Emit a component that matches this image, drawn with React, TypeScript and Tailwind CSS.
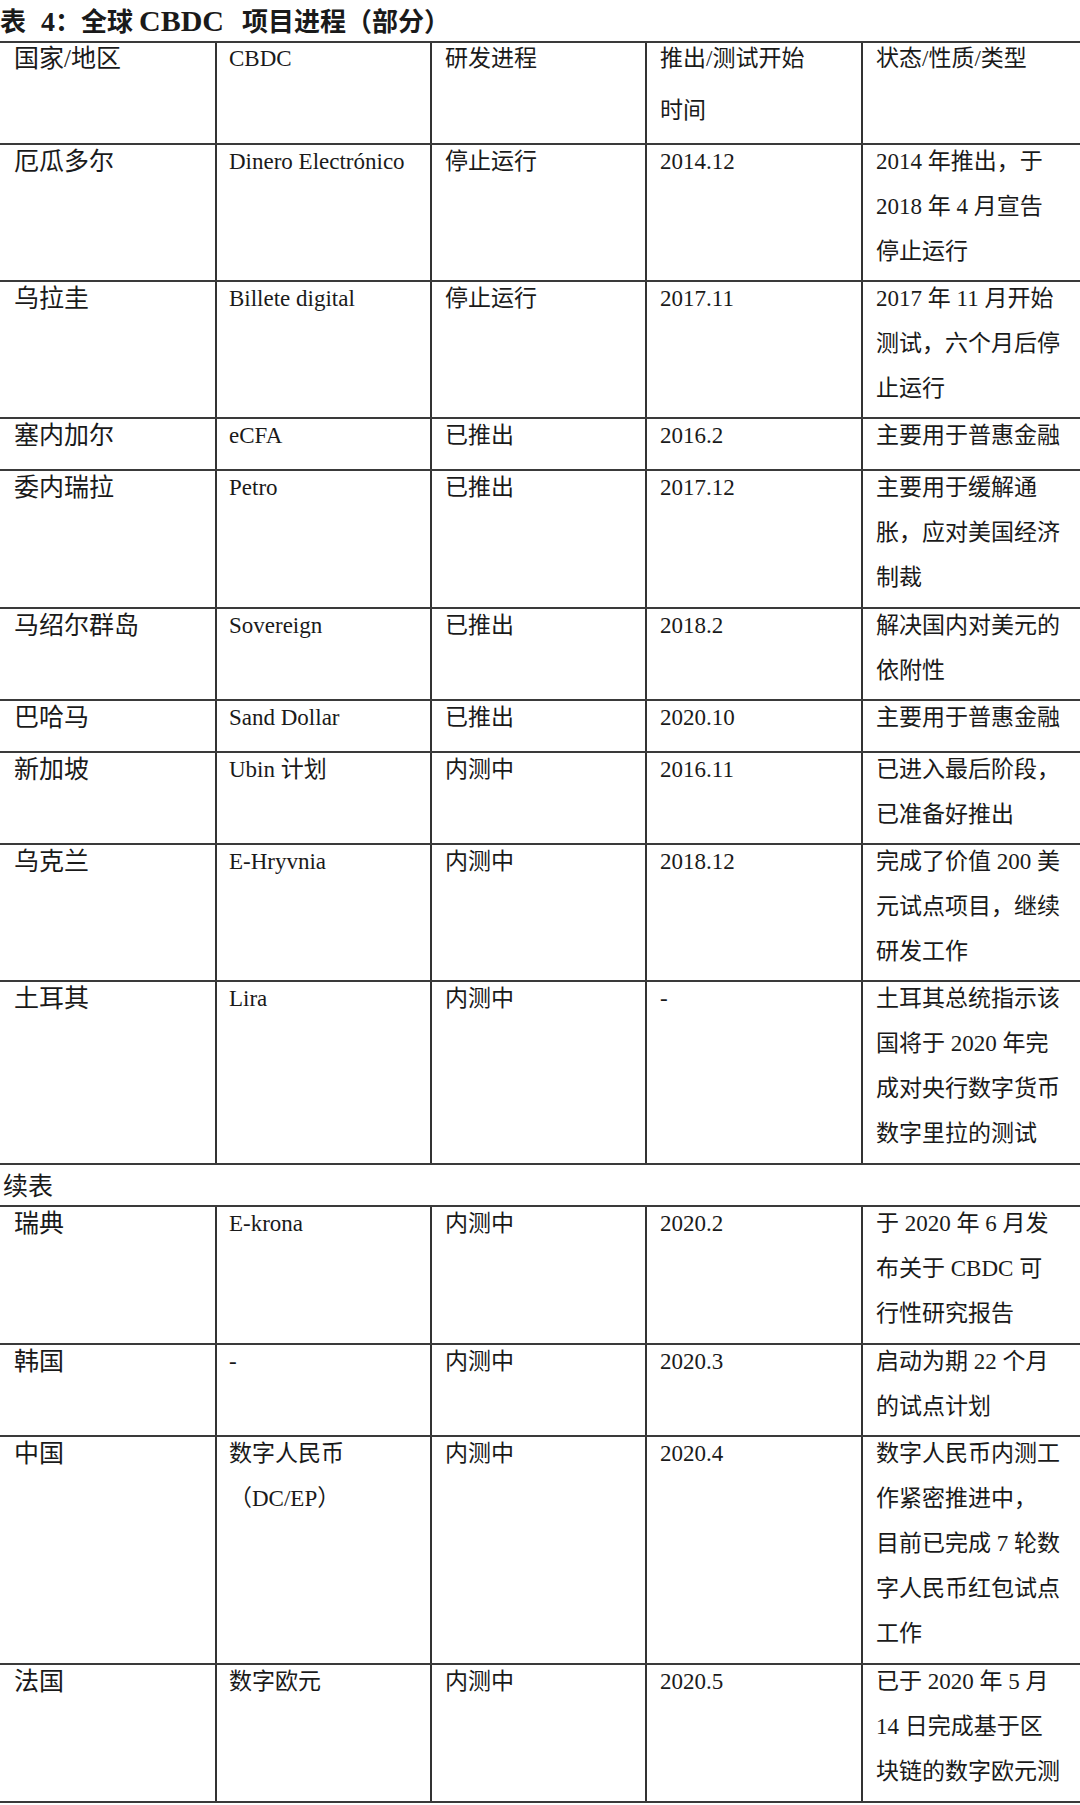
import React from "react";

type Row = { h: string; cells: string[][] };

const header: Row = {
  h: "h-[102px]",
  cells: [["国家/地区"], ["CBDC"], ["研发进程"], ["推出/测试开始", "时间"], ["状态/性质/类型"]],
};

const part1: Row[] = [
  {
    h: "h-[137px]",
    cells: [["厄瓜多尔"], ["Dinero Electrónico"], ["停止运行"], ["2014.12"], ["2014 年推出，于", "2018 年 4 月宣告", "停止运行"]],
  },
  {
    h: "h-[137px]",
    cells: [["乌拉圭"], ["Billete digital"], ["停止运行"], ["2017.11"], ["2017 年 11 月开始", "测试，六个月后停", "止运行"]],
  },
  { h: "h-[52px]", cells: [["塞内加尔"], ["eCFA"], ["已推出"], ["2016.2"], ["主要用于普惠金融"]] },
  {
    h: "h-[138px]",
    cells: [["委内瑞拉"], ["Petro"], ["已推出"], ["2017.12"], ["主要用于缓解通", "胀，应对美国经济", "制裁"]],
  },
  { h: "h-[92px]", cells: [["马绍尔群岛"], ["Sovereign"], ["已推出"], ["2018.2"], ["解决国内对美元的", "依附性"]] },
  { h: "h-[52px]", cells: [["巴哈马"], ["Sand Dollar"], ["已推出"], ["2020.10"], ["主要用于普惠金融"]] },
  { h: "h-[92px]", cells: [["新加坡"], ["Ubin 计划"], ["内测中"], ["2016.11"], ["已进入最后阶段，", "已准备好推出"]] },
  {
    h: "h-[137px]",
    cells: [["乌克兰"], ["E-Hryvnia"], ["内测中"], ["2018.12"], ["完成了价值 200 美", "元试点项目，继续", "研发工作"]],
  },
  {
    h: "h-[183px]",
    cells: [
      ["土耳其"],
      ["Lira"],
      ["内测中"],
      ["-"],
      ["土耳其总统指示该", "国将于 2020 年完", "成对央行数字货币", "数字里拉的测试"],
    ],
  },
];

const part2: Row[] = [
  {
    h: "h-[138px]",
    cells: [["瑞典"], ["E-krona"], ["内测中"], ["2020.2"], ["于 2020 年 6 月发", "布关于 CBDC 可", "行性研究报告"]],
  },
  { h: "h-[92px]", cells: [["韩国"], ["-"], ["内测中"], ["2020.3"], ["启动为期 22 个月", "的试点计划"]] },
  {
    h: "h-[228px]",
    cells: [
      ["中国"],
      ["数字人民币", "（DC/EP）"],
      ["内测中"],
      ["2020.4"],
      ["数字人民币内测工", "作紧密推进中，", "目前已完成 7 轮数", "字人民币红包试点", "工作"],
    ],
  },
  {
    h: "h-[138px]",
    cells: [["法国"], ["数字欧元"], ["内测中"], ["2020.5"], ["已于 2020 年 5 月", "14 日完成基于区", "块链的数字欧元测"]],
  },
];

const Cell = ({ lines, col, head }: { lines: string[]; col: number; head?: boolean }) => {
  const side =
    col === 0
      ? "pl-[14px] text-[25px]"
      : col === 1
      ? "border-l-2 border-[#333333] pl-[12px] text-[23px]"
      : "border-l-2 border-[#333333] pl-[13px] text-[23px]";
  return (
    <div className={side}>
      <div className={head ? "-mt-[10px] leading-[52px]" : "-mt-[6px] leading-[45px]"}>
        {lines.map((l, i) => (
          <div key={i} className="whitespace-nowrap">
            {l}
          </div>
        ))}
      </div>
    </div>
  );
};

const TableRow = ({ row, head }: { row: Row; head?: boolean }) => (
  <div className={`grid grid-cols-[215px_215px_215px_216px_1fr] border-b-2 border-[#3a3a3a] ${row.h}`}>
    {row.cells.map((c, i) => (
      <Cell key={i} lines={c} col={i} head={head} />
    ))}
  </div>
);

export default function App() {
  return (
    <div className="w-[1080px] bg-white text-[#1a1a1a] font-['Liberation_Serif','Noto_Sans_CJK_SC',serif]">
      {/* caption */}
      <div className="h-[41px] whitespace-nowrap text-[26px] font-bold leading-[41px]">
        <span>表</span>
        <span className="ml-[15px] text-[28px]">4</span>
        <span>：全球</span>
        <span className="ml-[6px] text-[30px]">CBDC</span>
        <span className="ml-[18px]">项目进程（部分）</span>
      </div>

      <div className="border-t-2 border-[#3a3a3a]">
        <TableRow row={header} head />
        {part1.map((r, i) => (
          <TableRow key={i} row={r} />
        ))}
      </div>

      <div className="h-[40px] overflow-hidden pl-[3px] text-[25px] leading-[44px]">续表</div>

      <div className="border-t-2 border-[#3a3a3a]">
        {part2.map((r, i) => (
          <TableRow key={i} row={r} />
        ))}
      </div>
    </div>
  );
}
